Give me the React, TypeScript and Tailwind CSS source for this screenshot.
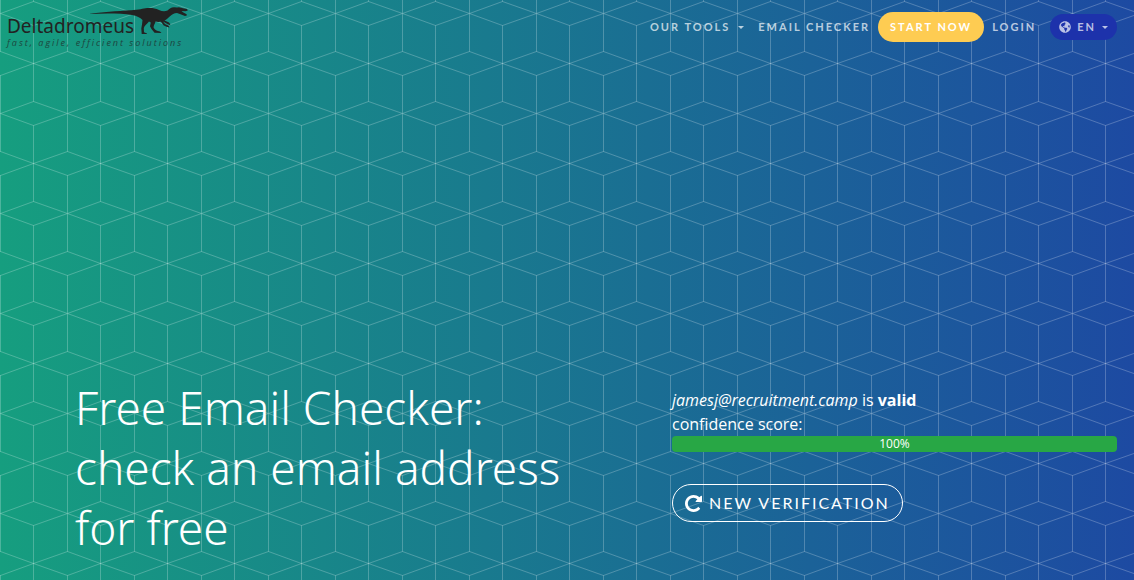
import React from "react";
import { FaGlobeAmericas } from "react-icons/fa";

function CubePattern() {
  return (
    <svg className="absolute inset-0 h-full w-full" aria-hidden="true">
      <defs>
        <pattern id="cubes" width="67" height="100" patternUnits="userSpaceOnUse" patternTransform="translate(0 13)">
          <path
            d="M0.5 0.5L33.5 -11.5L67.5 0.5L33.5 12.5ZM0.5 100.5L33.5 88.5L67.5 100.5L33.5 112.5ZM33.5 12.5V88.5M0.5 0V38.5M0.5 62.5V100M-33.5 50.5L0.5 38.5L33.5 50.5L0.5 62.5ZM33.5 50.5L67.5 38.5L100.5 50.5L67.5 62.5Z"
            fill="none"
            stroke="#ffffff"
            strokeOpacity="0.23"
          />
        </pattern>
      </defs>
      <rect width="100%" height="100%" fill="url(#cubes)" />
    </svg>
  );
}

function Dinosaur() {
  return (
    <svg className="absolute left-[89px] top-[6px] h-[29px] w-[100px]" viewBox="0 0 100 29" fill="#222222" aria-hidden="true">
      <path d="M0 8C12 6 28 5 42 4.200C50 3.800 54 2.800 58 2.100C62 1.600 66 2.200 70 3.900C73 5.400 76 5.700 78.500 4.400C80.500 2.800 82 1.300 85 1.200L88 1.500L90 1.300L94 2.300L98 3.100L98.800 4.600L96.500 5.200L92.500 5.100L94 6.300L97.600 8.200L97.800 9.500L96 10L91.500 8.200L88 7C85 7.200 83 8.500 81 10.300C79 12.200 77.500 13.800 75.500 14.500L80 16.500L81.500 18.700L80.500 19L77.500 17.500L74 15.500L76 18L79.500 19.500L80.500 21.500L77.500 20.700L74.500 19.200L72 15.800C70 16 68 16 66.500 15.600C66 18 64.500 19.500 64.600 21.500C65.500 23.800 68 25 71 25.600L72.500 27L65.500 26.700L62.500 23L61 20.300L61.800 16.500L60 15.500C58 18 55.500 19.500 54.800 22L55 26.300L58 27.400V28L52.700 27.900L52.300 22.500L53 18.500L53.500 14C51 11.500 48 10 43 9C32 7.200 16 7.100 0 8Z" />
    </svg>
  );
}

function RepeatIcon() {
  return (
    <svg className="size-[17px]" viewBox="128 128 1536 1536" fill="currentColor" aria-hidden="true">
      <path d="M1664 256v448q0 26-19 45t-45 19H1152q-42 0-59-40-17-39 14-69l138-138Q1097 384 896 384q-104 0-198.500 40.500T534 534 424.500 697.500 384 896t40.500 198.500T534 1258t163.500 109.500T896 1408q119 0 225-52t179-147q7-10 23-12 15 0 25 9l137 138q9 8 9.500 20.500t-7.500 22.500q-109 132-264 204.500T896 1664q-156 0-298-61t-245-164-164-245-61-298 61-298 164-245 245-164 298-61q147 0 284.500 55.500T1425 340l130-129q29-31 70-14 39 17 39 59z" />
    </svg>
  );
}

function Caret() {
  return <span className="border-x-3 border-t-3 border-x-transparent border-t-current" />;
}

export default function App() {
  return (
    <div className="relative flex min-h-screen flex-col overflow-hidden bg-linear-to-r/srgb from-[#169e7f] to-[#1d4aa2] font-['Open_Sans',sans-serif] text-white">
      <CubePattern />
      <header className="relative flex items-start justify-between pr-[17px]">
        <a href="#home" className="relative block w-52 pl-[7px] pt-4 font-['Noto_Sans',sans-serif] text-[#222222]">
          <Dinosaur />
          <span className="block text-[19px] leading-5">Deltadromeus</span>
          <span className="block whitespace-nowrap font-['Open_Sans',sans-serif] text-[9px] italic leading-[14px] tracking-[2px] opacity-70">fast, agile, efficient solutions</span>
        </a>
        <nav className="flex items-center pt-3 font-['Lato',sans-serif] text-[11px] font-bold tracking-[2px] text-white/70">
          <button className="flex items-center gap-2">
            OUR TOOLS <Caret />
          </button>
          <a href="#checker" className="ml-[14px]">EMAIL CHECKER</a>
          <a href="#start" className="ml-2 flex h-[30px] items-center rounded-full bg-[#fecc52] px-3 text-white">START NOW</a>
          <a href="#login" className="ml-2">LOGIN</a>
          <button className="ml-[14px] flex h-[26px] items-center gap-1.5 rounded-full bg-[#1d32ab] px-[9px]">
            <FaGlobeAmericas className="size-3" />
            <span>EN</span>
            <Caret />
          </button>
        </nav>
      </header>
      <main className="relative mt-auto grid grid-cols-2 gap-5 pb-[23px] pl-[75px] pr-[17px]">
        <h1 className="font-['Noto_Sans',sans-serif] text-[46px] font-light leading-[60px]">
          Free Email Checker:
          <br />
          check an email address
          <br />
          for free
        </h1>
        <section className="pl-[66px] pt-[11px]">
          <p className="leading-6">
            <em>jamesj@recruitment.camp</em> is <strong>valid</strong>
          </p>
          <p className="leading-6">confidence score:</p>
          <div role="progressbar" aria-label="confidence score" aria-valuenow={100} className="h-4 rounded bg-[#28a745] text-center text-xs leading-4">
            100%
          </div>
          <button className="mt-8 flex h-[38px] items-center gap-[7px] rounded-full border border-white px-3 font-['Lato',sans-serif] tracking-[2px]">
            <RepeatIcon />
            NEW VERIFICATION
          </button>
        </section>
      </main>
    </div>
  );
}
